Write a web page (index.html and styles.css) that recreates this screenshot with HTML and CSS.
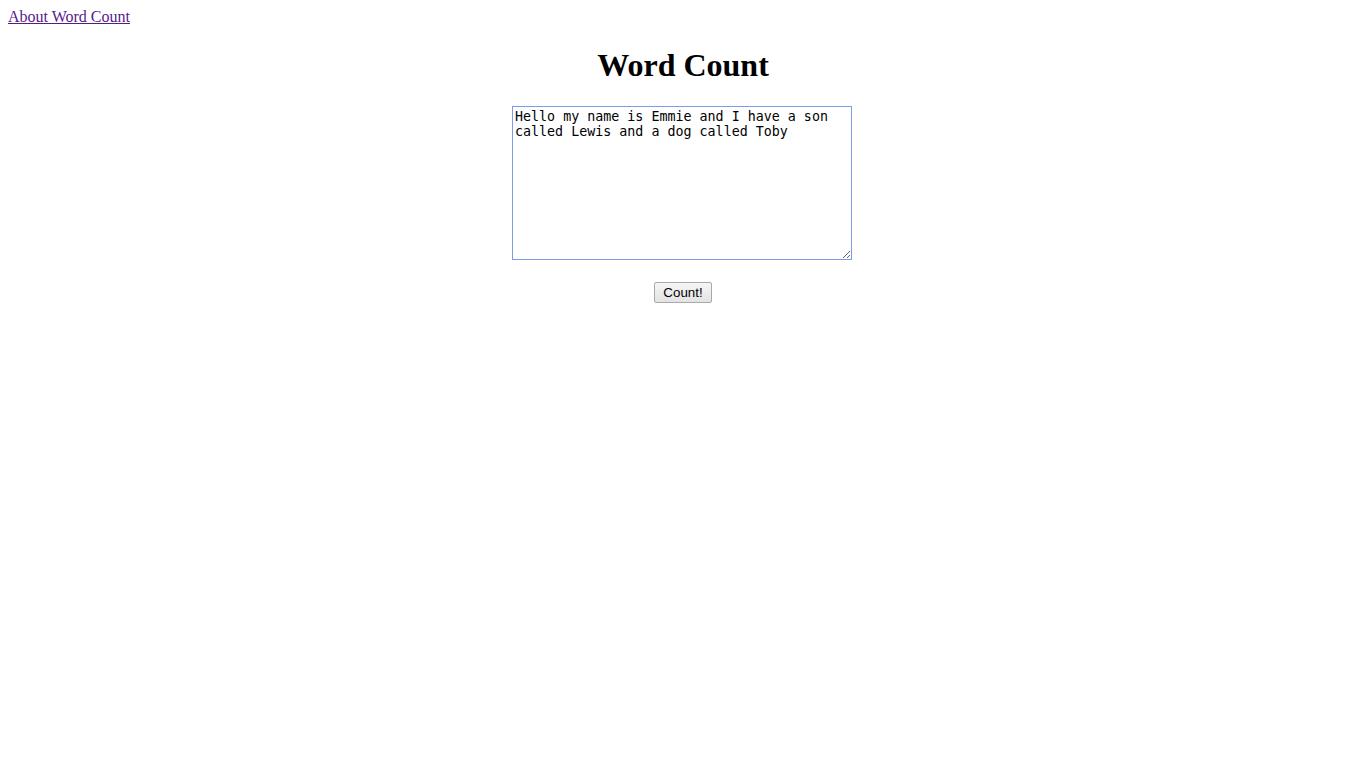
FILE: index.html
```html
<!DOCTYPE html>
<html>
<head>
<meta charset="utf-8">
<title>Word Count</title>
<link rel="stylesheet" href="styles.css">
</head>
<body class="page">
<a class="about-link" href="#">About Word Count</a>
<div class="main">
<h1 class="title">Word Count</h1>
<form class="count-form">
<textarea class="text-input" cols="40" rows="10" spellcheck="false">Hello my name is Emmie and I have a son called Lewis and a dog called Toby</textarea>
<br><br>
<button class="count-btn" type="button">Count!</button>
</form>
</div>
</body>
</html>
```

FILE: styles.css
```css
.page {
  margin: 8px;
  font-family: "Liberation Serif", "Times New Roman", serif;
  font-size: 16px;
  color: #000;
  background: #fff;
}
.about-link {
  color: #551a8b;
  text-decoration: underline;
}
.main {
  text-align: center;
}
.title {
  font-size: 32px;
  font-weight: bold;
  margin: 21.44px 0;
}
.count-form {
  margin: 0;
}
.text-input {
  box-sizing: border-box;
  width: 340px;
  height: 154px;
  margin: 0 2px 0 0;
  font-family: "DejaVu Sans Mono", monospace;
  font-size: 13.33px;
  line-height: 15px;
  padding: 2px;
  border: 1px solid #7d9ce6;
  outline: none;
  resize: both;
  overflow: auto;
  color: #000;
  background: #fff;
}
.count-btn {
  font-family: "Liberation Sans", Arial, sans-serif;
  font-size: 13.33px;
  padding: 1px 8px;
  height: 21px;
  border: 1px solid #a9a9a9;
  border-radius: 2px;
  background: linear-gradient(#f6f6f6, #e3e3e3);
  color: #000;
}
```
